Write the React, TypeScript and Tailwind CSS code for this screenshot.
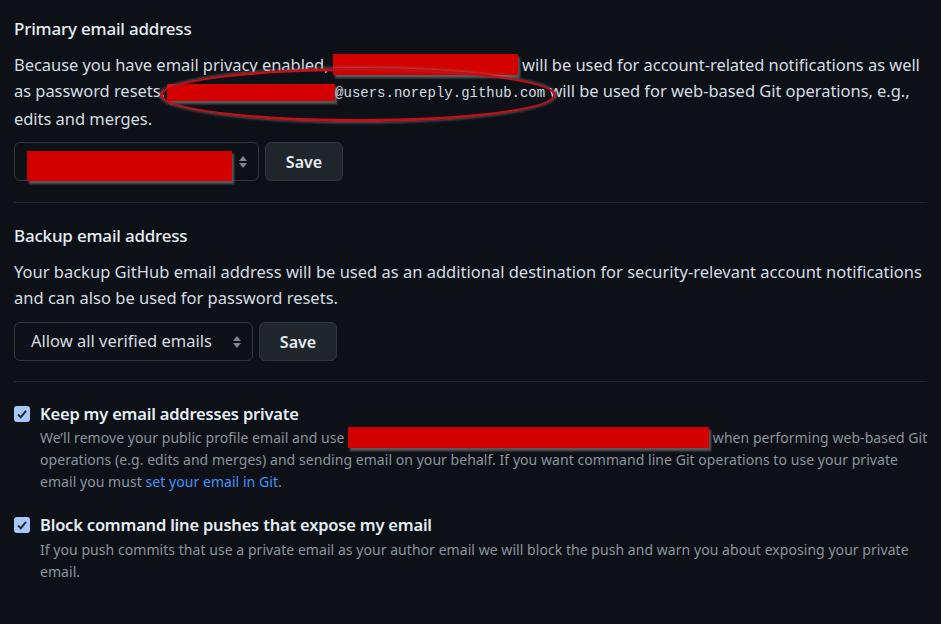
import React from "react";

const Redact = ({ w, h, className = "" }: { w: number; h: number; className?: string }) => (
  <span
    className={"inline-block align-middle bg-[#d40000] shadow-[2px_3px_2px_rgba(120,120,120,0.7)] " + className}
    style={{ width: w, height: h }}
  />
);

const SelectArrows = () => (
  <svg width="10" height="16" viewBox="0 0 10 16" className="shrink-0">
    <path d="M5 2 L9 7 H1 Z" fill="#7d8590" />
    <path d="M5 14 L9 9 H1 Z" fill="#7d8590" />
  </svg>
);

const Check = () => (
  <span className="flex h-[16px] w-[16px] shrink-0 items-center justify-center rounded-[3px] bg-[#a8c7fa]">
    <svg width="12" height="12" viewBox="0 0 12 12">
      <path d="M2 6.5 L4.8 9.2 L10 2.8" stroke="#1b2a3f" strokeWidth="2" fill="none" />
    </svg>
  </span>
);

export default function App() {
  return (
    <div
      className="relative h-[624px] w-[941px] overflow-hidden bg-[#0d1117] px-[14px] text-[#e6edf3]"
      style={{ fontFamily: '"Noto Sans", "Open Sans", sans-serif' }}
    >
      {/* Primary */}
      <div className="pt-[16px]">
        <h2 className="text-[17px] font-medium leading-[26px] tracking-[-0.2px]">Primary email address</h2>
        <p className="mt-[10px] text-[16.5px] leading-[26px] tracking-[-0.05px] text-[#d5dce3] whitespace-nowrap">
          Because you have email privacy enabled, <Redact w={185} h={21} className="-mt-[4px]" /> will be used for account-related notifications as well
          <br />
          as password resets. <Redact w={168} h={17} className="-ml-[2px]" />
          <span className="font-['Liberation_Mono',monospace] text-[14px] tracking-[0px]">@users.noreply.github.com</span> will be used for web-based Git operations, e.g.,
          <br />
          edits and merges.
        </p>
        <div className="mt-[10px] flex gap-[6px]">
          <div className="flex h-[39px] w-[245px] items-center justify-between rounded-[6px] border border-[#30363d] bg-[#0d1117] pl-[12px] pr-[10px]">
            <Redact w={205} h={30} className="mt-[8px]" />
            <SelectArrows />
          </div>
          <button className="h-[39px] w-[78px] rounded-[6px] border border-[#30363d] bg-[#21262d] text-[16px] font-semibold text-[#e6edf3]">
            Save
          </button>
        </div>
      </div>
      <div className="mt-[21px] h-px bg-[#21262d]" />

      {/* Backup */}
      <div className="pt-[20px]">
        <h2 className="text-[17px] font-medium leading-[26px] tracking-[-0.2px]">Backup email address</h2>
        <p className="mt-[10px] text-[16.5px] leading-[26px] tracking-[0px] text-[#d5dce3] whitespace-nowrap">
          Your backup GitHub email address will be used as an additional destination for security-relevant account notifications
          <br />
          and can also be used for password resets.
        </p>
        <div className="mt-[11px] flex gap-[6px]">
          <div className="flex h-[39px] w-[239px] items-center justify-between rounded-[6px] border border-[#30363d] bg-[#0d1117] pl-[16px] pr-[10px]">
            <span className="text-[16.5px] tracking-[0px] text-[#d5dce3]">Allow all verified emails</span>
            <SelectArrows />
          </div>
          <button className="h-[39px] w-[78px] rounded-[6px] border border-[#30363d] bg-[#21262d] text-[16px] font-semibold text-[#e6edf3]">
            Save
          </button>
        </div>
      </div>
      <div className="mt-[20px] h-px bg-[#21262d]" />

      {/* Checkbox 1 */}
      <div className="mt-[21px] flex gap-[10px]">
        <div className="pt-[3px]">
          <Check />
        </div>
        <div>
          <div className="text-[16.5px] font-semibold leading-[22px] tracking-[-0.2px]">Keep my email addresses private</div>
          <p className="mt-[2px] text-[14px] leading-[22px] tracking-[0.05px] text-[#8b949e] whitespace-nowrap">
            We’ll remove your public profile email and use <Redact w={361} h={21} className="-mt-[3px]" /> when performing web-based Git
            <br />
            operations (e.g. edits and merges) and sending email on your behalf. If you want command line Git operations to use your private
            <br />
            email you must <span className="text-[#4493f8]">set your email in Git</span>.
          </p>
        </div>
      </div>

      {/* Checkbox 2 */}
      <div className="mt-[21px] flex gap-[10px]">
        <div className="pt-[3px]">
          <Check />
        </div>
        <div>
          <div className="text-[16.5px] font-semibold leading-[22px] tracking-[-0.2px]">Block command line pushes that expose my email</div>
          <p className="mt-[3px] text-[14px] leading-[22px] tracking-[0.05px] text-[#8b949e] whitespace-nowrap">
            If you push commits that use a private email as your author email we will block the push and warn you about exposing your private
            <br />
            email.
          </p>
        </div>
      </div>

      {/* Red ellipse annotation */}
      <div className="pointer-events-none absolute left-[160px] top-[68px] h-[54px] w-[396px] rounded-[50%] border-[3px] border-[#c0101a] shadow-[0_0_3px_1px_rgba(140,140,140,0.6)]" />
    </div>
  );
}
